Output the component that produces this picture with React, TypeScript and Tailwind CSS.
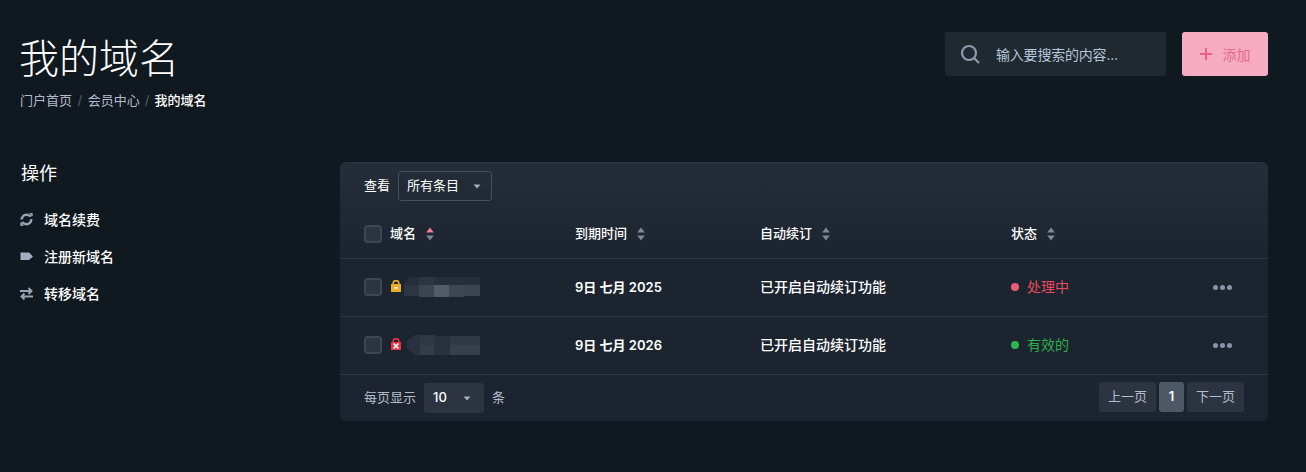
import React from 'react';

const font = "font-['Inter','Noto_Sans_CJK_SC',sans-serif]";

const SortIcon = ({ active }: { active?: boolean }) => (
  <svg width="8" height="14" viewBox="0 0 8 14" className="shrink-0">
    <path d="M4 0.5 L7.8 5.5 H0.2 Z" fill={active ? '#f27a96' : '#7d8798'} />
    <path d="M4 13.5 L7.8 8.5 H0.2 Z" fill="#7d8798" />
  </svg>
);

const Caret = () => (
  <svg width="8" height="5" viewBox="0 0 8 5" className="shrink-0">
    <path d="M0.5 0.5 H7.5 L4 4.5 Z" fill="#a4adbc" />
  </svg>
);

const Check = () => (
  <span className="block w-[18px] h-[18px] rounded-[4px] border-2 border-[#3d4654] bg-[#2b3440] shrink-0" />
);

const Dots = () => (
  <div className="flex gap-[2px] justify-end w-full pr-[36px]">
    <span className="w-[5px] h-[5px] rounded-full bg-[#8a94a8]" />
    <span className="w-[5px] h-[5px] rounded-full bg-[#8a94a8]" />
    <span className="w-[5px] h-[5px] rounded-full bg-[#8a94a8]" />
  </div>
);

const Lock = ({ bad }: { bad?: boolean }) => (
  <svg width="10" height="12" viewBox="0 0 10 12" className="block shrink-0">
    <path d="M2.2 5 V3.2 a2.8 2.6 0 0 1 5.6 0 V5" fill="none" stroke={bad ? '#e5343f' : '#e8ad2b'} strokeWidth="1.6" />
    <rect x="0" y="4" width="10" height="8" fill={bad ? '#e5343f' : '#e8ad2b'} />
    {bad ? (
      <path d="M2.5 5.5 L7.5 10.5 M7.5 5.5 L2.5 10.5" stroke="#fff" strokeWidth="1.7" />
    ) : (
      <rect x="3.5" y="7" width="3" height="1.6" fill="#fff" />
    )}
  </svg>
);

// pixelated redaction over the domain name
const Mosaic = ({ variant }: { variant: number }) =>
  variant === 0 ? (
    <svg width="76" height="20" viewBox="0 0 76 20" className="shrink-0" shapeRendering="crispEdges">
      <path d="M6 0 H76 V19 H6 L0 14 V6 Z" fill="#252e3a" />
      <rect x="15" y="0" width="15" height="8" fill="#2c3642" />
      <rect x="0" y="8" width="15" height="11" fill="#2c3642" />
      <rect x="15" y="8" width="15" height="12" fill="#3b4450" />
      <rect x="30" y="8" width="15" height="12" fill="#525b67" />
      <rect x="45" y="8" width="15" height="12" fill="#3d4652" />
      <rect x="60" y="8" width="16" height="11" fill="#3a4350" />
    </svg>
  ) : (
    <svg width="73" height="21" viewBox="0 0 73 21" className="shrink-0 ml-[3px]" shapeRendering="crispEdges">
      <path d="M8 0 H28 V1 H73 V20 H23 V20 H8 L0 14 V6 Z" fill="#28313d" />
      <rect x="13" y="0" width="14" height="10" fill="#2e3844" />
      <rect x="13" y="10" width="14" height="10" fill="#333c48" />
      <rect x="43" y="1" width="30" height="9" fill="#2f3945" />
      <rect x="43" y="10" width="30" height="10" fill="#363f4b" />
    </svg>
  );

const actions = [
  {
    label: '域名续费',
    icon: (
      <svg width="13" height="13" viewBox="0 0 13 13" className="shrink-0">
        <circle cx="6.5" cy="6.5" r="4.7" fill="none" stroke="#9aa1b0" strokeWidth="2.6" />
        <path d="M9 0 L12.8 0.2 L12.6 4.5 Z M4 13 L0.2 12.8 L0.4 8.5 Z" fill="#9aa1b0" />
        <path d="M0 7 L13 3 V5.4 L0 9.4 Z" fill="#101820" />
      </svg>
    ),
  },
  {
    label: '注册新域名',
    icon: (
      <svg width="13" height="13" viewBox="0 0 13 13" className="shrink-0">
        <path d="M0.5 2.5 H9 L13 6.5 L9 10 H0.5 Z" fill="#a3acc0" />
      </svg>
    ),
  },
  {
    label: '转移域名',
    icon: (
      <svg width="13" height="13" viewBox="0 0 13 13" fill="none" stroke="#9aa1b0" strokeWidth="2" className="shrink-0">
        <path d="M0 4 H11 M8.5 1 L11.5 4 L8.5 7" />
        <path d="M13 9.5 H2 M4.5 6.5 L1.5 9.5 L4.5 12.5" />
      </svg>
    ),
  },
];

const rows = [
  { date: '9日 七月 2025', status: '处理中', dot: 'bg-[#e85c78]', text: 'text-[#e8495c]', bad: false },
  { date: '9日 七月 2026', status: '有效的', dot: 'bg-[#2fb84f]', text: 'text-[#2bae4a]', bad: true },
];

const gridCols = 'grid grid-cols-[211px_185px_251px_201px_1fr] items-center';

export default function App() {
  return (
    <div className={`${font} w-[1306px] h-[472px] overflow-hidden bg-[#101820] text-white`}>
      <div className="flex justify-between pl-[19px] pr-[38px] pt-8">
        <div>
          <h1 className="text-[40px] leading-[52px] font-light mt-[1px]">我的域名</h1>
          <div className="flex items-center text-[13px] leading-5 mt-[5px] pl-px text-[#b4bccb]">
            <span>门户首页</span>
            <span className="mx-[5.5px] text-[#555e6c]">/</span>
            <span>会员中心</span>
            <span className="mx-[5px] text-[#555e6c]">/</span>
            <span className="text-white font-medium">我的域名</span>
          </div>
        </div>
        <div className="flex gap-4 h-11">
          <div className="w-[221px] bg-[#202830] rounded-[3px] flex items-center pl-[15px]">
            <svg width="20" height="20" viewBox="0 0 20 20" fill="none" stroke="#8a9bb0" strokeWidth="2.2">
              <circle cx="9" cy="9" r="7" />
              <path d="M14 14 L19 19" />
            </svg>
            <span className="ml-[16px] text-[14px] tracking-[-0.2px] text-[#b4c6da]">输入要搜索的内容...</span>
          </div>
          <div className="w-[86px] bg-[#f5abc2] rounded-[3px] flex items-center justify-center gap-[11px] text-[14px] text-[#e8688a]">
            <svg width="12" height="12" viewBox="0 0 12 12" stroke="#e8607f" strokeWidth="2">
              <path d="M6 0 V12 M0 6 H12" />
            </svg>
            <span>添加</span>
          </div>
        </div>
      </div>

      <div className="flex pl-5 pr-[38px] mt-[52px]">
        <aside className="w-[320px] shrink-0">
          <h2 className="text-[18px] leading-6 pl-px">操作</h2>
          <ul className="mt-[23px] flex flex-col gap-[17px]">
            {actions.map((a) => (
              <li key={a.label} className="flex items-center gap-[11px] h-5 text-[14px] font-medium">
                {a.icon}
                <span>{a.label}</span>
              </li>
            ))}
          </ul>
        </aside>

        <section className="flex-1 rounded-md bg-[#1c242f] border-t border-[#2a3440] overflow-hidden h-[259px] flex flex-col">
          <div className="h-[96px] shrink-0 bg-gradient-to-b from-[#242d38] to-[#1c242f] border-b border-[#2d3641]">
            <div className="flex items-center gap-2 pl-6 pt-[8px] h-[38px] text-[13px]">
              <span>查看</span>
              <div className="w-[94px] h-[30px] rounded-[3px] border border-[#474f5c] flex items-center justify-between pl-2 pr-[10px]">
                <span>所有条目</span>
                <Caret />
              </div>
            </div>
            <div className={`${gridCols} pl-6 h-[57px] pt-[8px] text-[13px] font-medium`}>
              <div className="flex items-center gap-2">
                <Check />
                <span>域名</span>
                <span className="ml-[2px]"><SortIcon active /></span>
              </div>
              {['到期时间', '自动续订', '状态'].map((h) => (
                <div key={h} className="flex items-center gap-[10px]">
                  <span>{h}</span>
                  <SortIcon />
                </div>
              ))}
            </div>
          </div>

          {rows.map((r, i) => (
            <div key={r.date} className={`${gridCols} pl-6 h-[58px] shrink-0 border-b border-[#2d3641] text-[14px] leading-[20px]`}>
              <div className="flex items-center gap-[3px] -mt-[1px]">
                <Check />
                <span className="ml-[6px] -mt-[2px]"><Lock bad={r.bad} /></span>
                <Mosaic variant={i} />
              </div>
              <div className="text-[13px] font-semibold -mt-[1px]">{r.date}</div>
              <div className="font-medium -mt-[2px]">已开启自动续订功能</div>
              <div className={`flex items-center gap-2 -mt-[2px] ${r.text}`}>
                <span className={`w-2 h-2 rounded-full ${r.dot}`} />
                <span>{r.status}</span>
              </div>
              <Dots />
            </div>
          ))}

          <div className="flex-1 flex items-center justify-between pl-6 pr-6 text-[13px] text-[#b4bccb]">
            <div className="flex items-center gap-2">
              <span>每页显示</span>
              <div className="w-[60px] h-[30px] rounded-[3px] bg-[#2b3440] flex items-center justify-between pl-[9px] pr-[13px] text-white font-medium">
                <span>10</span>
                <Caret />
              </div>
              <span>条</span>
            </div>
            <div className="flex items-center gap-[3px] h-[30px] mb-[2px]">
              <span className="w-[57px] h-full rounded-[3px] bg-[#2b3440] flex items-center justify-center">上一页</span>
              <span className="w-[25px] h-full rounded-[3px] bg-[#4d5866] flex items-center justify-center text-white font-semibold">1</span>
              <span className="w-[57px] h-full rounded-[3px] bg-[#2b3440] flex items-center justify-center">下一页</span>
            </div>
          </div>
        </section>
      </div>
    </div>
  );
}
